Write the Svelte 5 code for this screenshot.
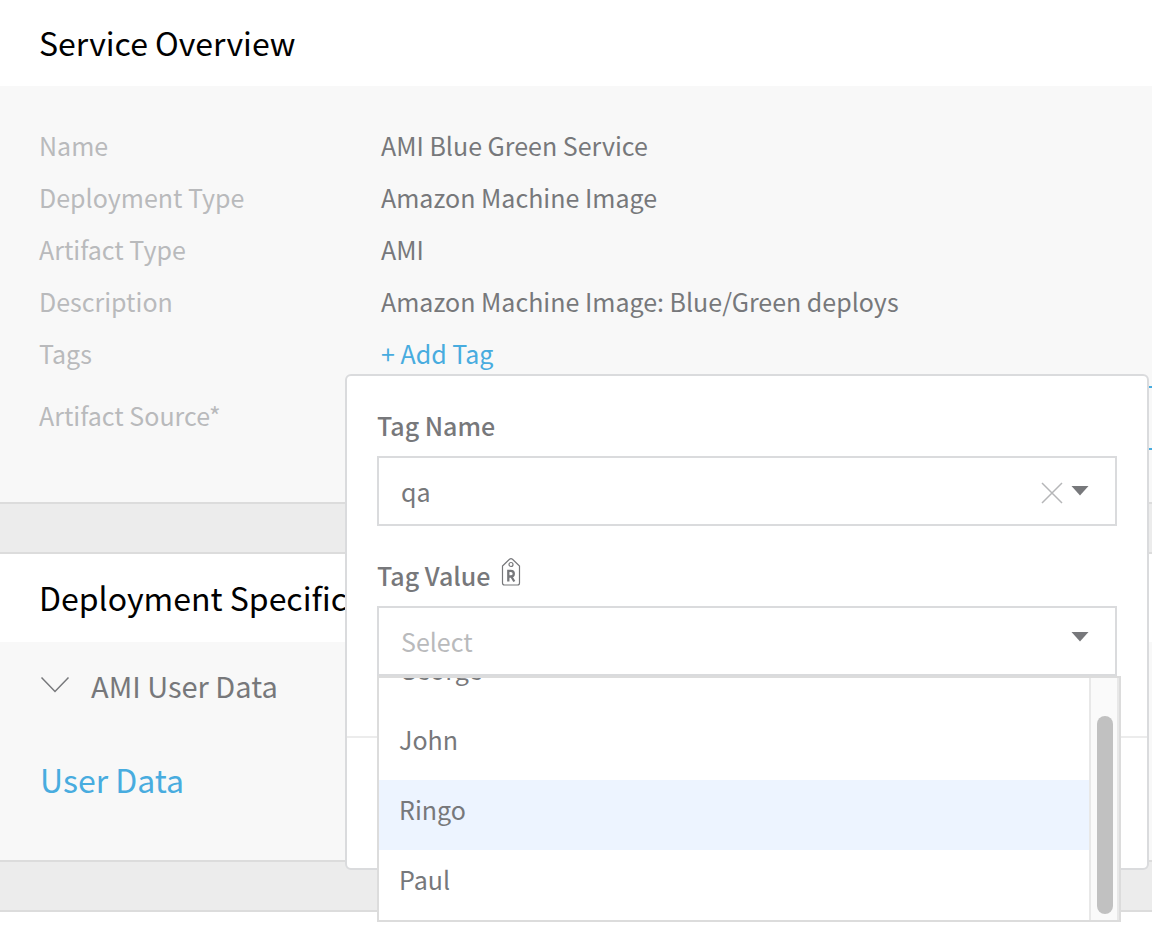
<script>
  import { onMount } from 'svelte';

  const details = [
    ['Name', 'AMI Blue Green Service'],
    ['Deployment Type', 'Amazon Machine Image'],
    ['Artifact Type', 'AMI'],
    ['Description', 'Amazon Machine Image: Blue/Green deploys']
  ];
  const tagNames = ['qa'];
  const tagValues = ['George', 'John', 'Ringo', 'Paul'];

  let tagName = $state('qa');
  let tagValue = $state('');
  let active = $state('Ringo');
  let list;
  let thumbTop = $state(0);
  let thumbHeight = $state(0);

  function syncThumb() {
    const inset = 6;
    const room = list.clientHeight - inset;
    thumbHeight = Math.round((room * list.clientHeight) / list.scrollHeight) - inset;
    thumbTop = Math.round((room * list.scrollTop) / list.scrollHeight) + inset;
  }

  onMount(() => {
    list.scrollTop = list.scrollHeight;
    syncThumb();
  });
</script>

<main>
  <section>
    <h2>Service Overview</h2>
    <div class="body overview">
      <dl>
        {#each details as [label, value]}
          <div class="row"><dt>{label}</dt><dd>{value}</dd></div>
        {/each}
        <div class="row">
          <dt>Tags</dt>
          <dd class="anchor">
            <button class="link" type="button">+ Add Tag</button>
            <form class="popover">
              <div class="fields">
                <div class="label"><label for="tag-name">Tag Name</label></div>
                <div class="field">
                  <select id="tag-name" bind:value={tagName}>
                    <option value="" hidden></option>
                    {#each tagNames as name}<option>{name}</option>{/each}
                  </select>
                  <button class="clear" type="button" aria-label="Clear tag name" onclick={() => (tagName = '')}>
                    <svg width="22" height="22" viewBox="0 0 22 22"><path d="M1 1 21 21M21 1 1 21" /></svg>
                  </button>
                  <svg class="caret" width="18" height="10" viewBox="0 0 18 10"><path d="M0.500 0H17.500L9 9.500Z" /></svg>
                </div>
                <div class="label second">
                  <label for="tag-value">Tag Value</label>
                  <svg class="tag" width="20" height="30" viewBox="0 0 20 30">
                    <path d="M1.500 9 8.500 2.300Q10 1 11.500 2.300L18.500 9V26Q18.500 28 16.500 28H3.500Q1.500 28 1.500 26Z" />
                    <circle cx="10" cy="7.500" r="2" />
                    <path class="r" d="M7.300 24.500V13.800H9.800Q12.800 13.800 12.800 16.800Q12.800 19.500 9.800 19.500H7.300M10.300 19.500 13.300 24.500" />
                  </svg>
                </div>
                <div class="field">
                  <select id="tag-value" class:empty={!tagValue} bind:value={tagValue}>
                    <option value="" hidden>Select</option>
                    {#each tagValues as value}<option>{value}</option>{/each}
                  </select>
                  <svg class="caret open" width="18" height="10" viewBox="0 0 18 10"><path d="M0.500 0H17.500L9 9.500Z" /></svg>
                  <div class="menu">
                    <div class="options" role="listbox" aria-label="Tag values" tabindex="-1" bind:this={list} onscroll={syncThumb}>
                      {#each tagValues as value}
                        <button
                          type="button"
                          role="option"
                          aria-selected={active === value}
                          class:active={active === value}
                          onmouseenter={() => (active = value)}
                          onclick={() => (tagValue = value)}>{value}</button>
                      {/each}
                    </div>
                    <div class="track">
                      <div class="thumb" style="top: {thumbTop}px; height: {thumbHeight}px"></div>
                    </div>
                  </div>
                </div>
              </div>
              <div class="footer"></div>
            </form>
          </dd>
        </div>
        <div class="row source">
          <dt>Artifact Source*</dt>
          <dd><button class="add" type="button">+ Add Artifact Source</button></dd>
        </div>
      </dl>
    </div>
  </section>
  <div class="gap"></div>
  <section>
    <h2>Deployment Specification</h2>
    <div class="body spec">
      <button class="toggle" type="button">
        <svg width="30" height="18" viewBox="0 0 30 18"><path d="M1.500 1.500 15 15.500 28.500 1.500" /></svg>
        AMI User Data
      </button>
      <a href="#user-data">User Data</a>
    </div>
  </section>
  <div class="gap"></div>
</main>

<style>
  :global(body) { margin: 0; background: #fff; }
  main {
    overflow: hidden;
    min-height: 100vh;
    font: 25px/52px "Noto Sans CJK SC", "Open Sans", sans-serif;
    color: #77787b;
  }
  main * { box-sizing: border-box; }
  button, select { margin: 0; padding: 0; border: 0; background: none; color: inherit; font: inherit; cursor: pointer; }
  h2 { margin: 0; padding: 0 39px 2px; font-size: 32px; font-weight: 400; line-height: 86px; color: #000; background: #fff; }
  section:first-child h2 { line-height: 84px; }
  .body { background: #f8f8f8; }
  .overview { padding: 33px 39px 51px; }
  dl, dd { margin: 0; }
  .row { display: grid; grid-template-columns: 342px 1fr; }
  dt { color: #b9babc; }
  .anchor { position: relative; }
  .link { display: block; line-height: 52px; color: #48acdf; }
  .source { line-height: 72px; }
  .source dd { display: flex; align-items: flex-start; padding: 7px 0 0 471px; margin-right: -60px; }
  .add { flex: 1 0 auto; height: 64px; padding: 0 30px; border: 2px solid #48acdf; color: #48acdf; line-height: 60px; }
  .gap { height: 52px; border: solid #dcdcdc; border-width: 2px 0; background: #ececec; }

  .popover {
    position: absolute;
    z-index: 1;
    top: 47px;
    left: -36px;
    right: -36px;
    border: 2px solid #dadbdd;
    border-radius: 6px;
    background: #fff;
  }
  .fields { padding: 24px 30px 60px; }
  .label { display: flex; align-items: center; gap: 11px; height: 56px; padding-bottom: 6px; font-weight: 500; line-height: 50px; }
  .second { margin-top: 24px; }
  .tag { margin-bottom: 6px; fill: none; stroke: #77787b; stroke-width: 1.2; }
  .tag .r { stroke-width: 2.3; }
  .field { position: relative; height: 70px; }
  select { appearance: none; width: 100%; height: 70px; padding: 0 100px 0 22px; border: 2px solid #dadbdd; background: #fff; line-height: 66px; }
  .empty { color: #b9babc; }
  .clear { position: absolute; top: 26px; right: 54px; display: flex; }
  .clear svg { fill: none; stroke: #b5b6b8; stroke-width: 1.5; }
  .caret { position: absolute; top: 30px; right: 28px; fill: #77787b; pointer-events: none; }
  .caret.open { top: 26px; }
  .menu { position: absolute; top: 70px; left: 0; right: -4px; display: flex; height: 246px; border: 2px solid #dcdcdc; background: #fff; }
  .options { flex: 1; overflow-y: auto; scrollbar-width: none; }
  .options button { display: block; width: 100%; height: 70px; padding: 0 20px 12px; line-height: 58px; text-align: left; }
  .options .active { background: #edf4ff; }
  .track { position: relative; width: 30px; border: solid #e8e8e8; border-width: 0 2px; background: #fafafa; }
  .thumb { position: absolute; left: 6px; width: 16px; border-radius: 8px; background: #c1c1c1; }
  .footer { height: 132px; border-top: 2px solid #ececec; }

  .spec { display: flex; flex-direction: column; align-items: flex-start; gap: 42px; height: 218px; padding: 17px 40px 0; }
  .toggle { display: flex; align-items: center; gap: 21px; font-size: 29px; line-height: 52px; }
  .toggle svg { fill: none; stroke: #77787b; stroke-width: 1.5; }
  a { font-size: 32px; line-height: 52px; color: #48acdf; text-decoration: none; }
</style>
